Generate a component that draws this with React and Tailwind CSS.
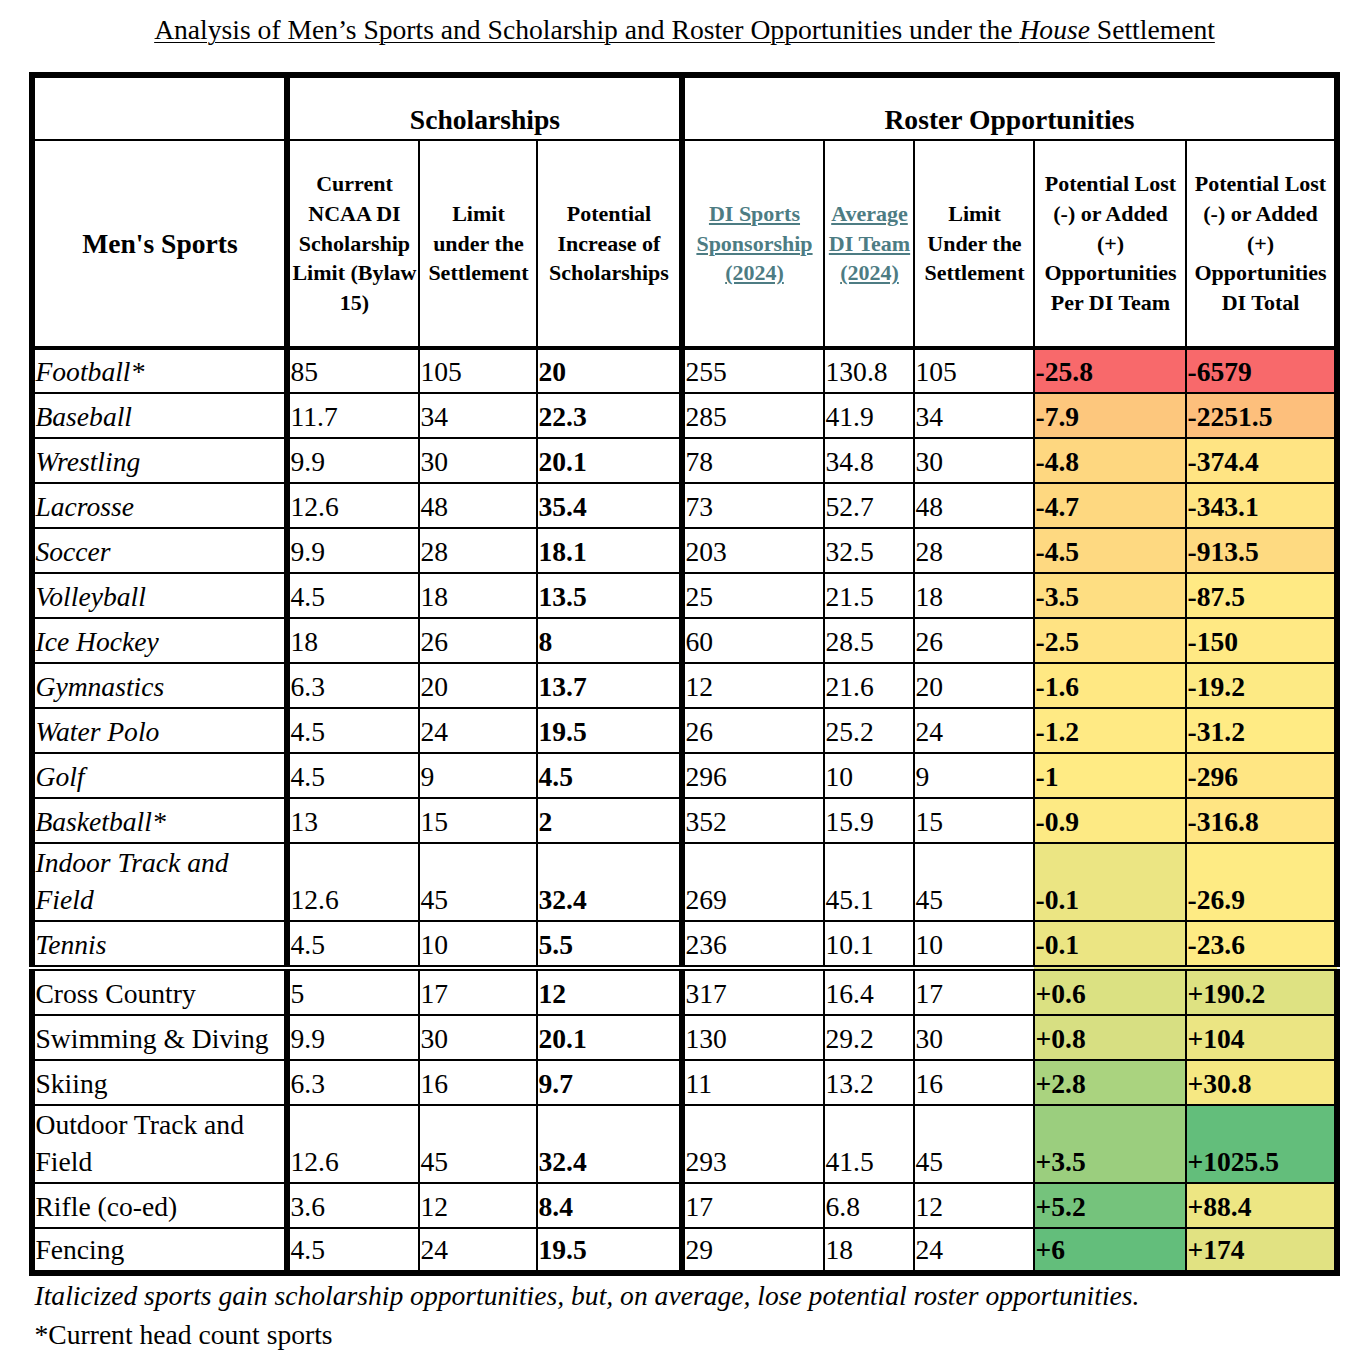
const sports = [
  { name: ["Football*"], italic: true, cur: "85", lim: "105", inc: "20", spons: "255", avg: "130.8", rlim: "105", per: "-25.8", perBg: "bg-[#f8696b]", tot: "-6579", totBg: "bg-[#f8696b]" },
  { name: ["Baseball"], italic: true, cur: "11.7", lim: "34", inc: "22.3", spons: "285", avg: "41.9", rlim: "34", per: "-7.9", perBg: "bg-[#fdc77d]", tot: "-2251.5", totBg: "bg-[#fdbf7c]" },
  { name: ["Wrestling"], italic: true, cur: "9.9", lim: "30", inc: "20.1", spons: "78", avg: "34.8", rlim: "30", per: "-4.8", perBg: "bg-[#fed780]", tot: "-374.4", totBg: "bg-[#ffe483]" },
  { name: ["Lacrosse"], italic: true, cur: "12.6", lim: "48", inc: "35.4", spons: "73", avg: "52.7", rlim: "48", per: "-4.7", perBg: "bg-[#fed880]", tot: "-343.1", totBg: "bg-[#ffe583]" },
  { name: ["Soccer"], italic: true, cur: "9.9", lim: "28", inc: "18.1", spons: "203", avg: "32.5", rlim: "28", per: "-4.5", perBg: "bg-[#fed981]", tot: "-913.5", totBg: "bg-[#feda81]" },
  { name: ["Volleyball"], italic: true, cur: "4.5", lim: "18", inc: "13.5", spons: "25", avg: "21.5", rlim: "18", per: "-3.5", perBg: "bg-[#fede82]", tot: "-87.5", totBg: "bg-[#ffea84]" },
  { name: ["Ice Hockey"], italic: true, cur: "18", lim: "26", inc: "8", spons: "60", avg: "28.5", rlim: "26", per: "-2.5", perBg: "bg-[#ffe383]", tot: "-150", totBg: "bg-[#ffe984]" },
  { name: ["Gymnastics"], italic: true, cur: "6.3", lim: "20", inc: "13.7", spons: "12", avg: "21.6", rlim: "20", per: "-1.6", perBg: "bg-[#ffe883]", tot: "-19.2", totBg: "bg-[#fdea84]" },
  { name: ["Water Polo"], italic: true, cur: "4.5", lim: "24", inc: "19.5", spons: "26", avg: "25.2", rlim: "24", per: "-1.2", perBg: "bg-[#ffea84]", tot: "-31.2", totBg: "bg-[#ffeb84]" },
  { name: ["Golf"], italic: true, cur: "4.5", lim: "9", inc: "4.5", spons: "296", avg: "10", rlim: "9", per: "-1", perBg: "bg-[#ffeb84]", tot: "-296", totBg: "bg-[#ffe683]" },
  { name: ["Basketball*"], italic: true, cur: "13", lim: "15", inc: "2", spons: "352", avg: "15.9", rlim: "15", per: "-0.9", perBg: "bg-[#fdea84]", tot: "-316.8", totBg: "bg-[#ffe583]" },
  { name: ["Indoor Track and", "Field"], italic: true, cur: "12.6", lim: "45", inc: "32.4", spons: "269", avg: "45.1", rlim: "45", per: "-0.1", perBg: "bg-[#ebe583]", tot: "-26.9", totBg: "bg-[#feeb84]" },
  { name: ["Tennis"], italic: true, sep: true, tall: true, cur: "4.5", lim: "10", inc: "5.5", spons: "236", avg: "10.1", rlim: "10", per: "-0.1", perBg: "bg-[#ebe583]", tot: "-23.6", totBg: "bg-[#feeb84]" },
  { name: ["Cross Country"], tall: true, cur: "5", lim: "17", inc: "12", spons: "317", avg: "16.4", rlim: "17", per: "+0.6", perBg: "bg-[#dbe182]", tot: "+190.2", totBg: "bg-[#dee282]" },
  { name: ["Swimming & Diving"], cur: "9.9", lim: "30", inc: "20.1", spons: "130", avg: "29.2", rlim: "30", per: "+0.8", perBg: "bg-[#d7df82]", tot: "+104", totBg: "bg-[#ebe583]" },
  { name: ["Skiing"], cur: "6.3", lim: "16", inc: "9.7", spons: "11", avg: "13.2", rlim: "16", per: "+2.8", perBg: "bg-[#aad37f]", tot: "+30.8", totBg: "bg-[#f6e883]" },
  { name: ["Outdoor Track and", "Field"], cur: "12.6", lim: "45", inc: "32.4", spons: "293", avg: "41.5", rlim: "45", per: "+3.5", perBg: "bg-[#9bce7e]", tot: "+1025.5", totBg: "bg-[#63be7b]" },
  { name: ["Rifle (co-ed)"], cur: "3.6", lim: "12", inc: "8.4", spons: "17", avg: "6.8", rlim: "12", per: "+5.2", perBg: "bg-[#75c37c]", tot: "+88.4", totBg: "bg-[#ede683]" },
  { name: ["Fencing"], cur: "4.5", lim: "24", inc: "19.5", spons: "29", avg: "18", rlim: "24", per: "+6", perBg: "bg-[#63be7b]", tot: "+174", totBg: "bg-[#e1e282]" },
];

const headers = [
  { lines: ["Current", "NCAA DI", "Scholarship", "Limit (Bylaw", "15)"] },
  { lines: ["Limit", "under the", "Settlement"] },
  { lines: ["Potential", "Increase of", "Scholarships"], thick: true },
  { lines: ["DI Sports", "Sponsorship", "(2024)"], link: true },
  { lines: ["Average", "DI Team", "(2024)"], link: true },
  { lines: ["Limit", "Under the", "Settlement"] },
  { lines: ["Potential Lost", "(-) or Added", "(+)", "Opportunities", "Per DI Team"] },
  { lines: ["Potential Lost", "(-) or Added", "(+)", "Opportunities", "DI Total"] },
];

const Lines = ({ lines }) =>
  lines.map((line, i) => (
    <span key={i}>
      {i > 0 && <br />}
      {line}
    </span>
  ));

const cell = "border-2 border-black p-0 pb-[2px] align-bottom text-left leading-[37px] whitespace-nowrap";

const SportRow = ({ s }) => {
  const sep = s.sep ? "border-b-[6px] [border-bottom-style:double]" : "";
  return (
    <tr className={s.tall ? "h-[47px]" : "h-[45px]"}>
      <td className={`${cell} ${sep} border-r-[6px] ${s.italic ? "italic" : ""}`}>
        <Lines lines={s.name} />
      </td>
      <td className={`${cell} ${sep}`}>{s.cur}</td>
      <td className={`${cell} ${sep}`}>{s.lim}</td>
      <td className={`${cell} ${sep} border-r-[6px] font-bold`}>{s.inc}</td>
      <td className={`${cell} ${sep}`}>{s.spons}</td>
      <td className={`${cell} ${sep}`}>{s.avg}</td>
      <td className={`${cell} ${sep}`}>{s.rlim}</td>
      <td className={`${cell} ${sep} font-bold ${s.perBg}`}>{s.per}</td>
      <td className={`${cell} ${sep} font-bold ${s.totBg}`}>{s.tot}</td>
    </tr>
  );
};

export default function App() {
  return (
    <div className="min-h-screen bg-white pt-[14px] text-black font-['Liberation_Serif','Times_New_Roman',serif] text-[27.6px]">
      <h1 className="text-center text-[27.6px] font-normal leading-[32px] underline decoration-1 underline-offset-[3px]">
        Analysis of Men’s Sports and Scholarship and Roster Opportunities under the <i>House</i> Settlement
      </h1>

      <table className="mx-auto mt-[26px] w-[1310px] table-fixed border-collapse border-[6px] border-black">
        <colgroup>
          <col className="w-[255px]" />
          <col className="w-[132px]" />
          <col className="w-[118px]" />
          <col className="w-[145px]" />
          <col className="w-[142px]" />
          <col className="w-[90px]" />
          <col className="w-[120px]" />
          <col className="w-[152px]" />
          <col className="w-[150px]" />
        </colgroup>
        <thead>
          <tr className="h-[65px]">
            <th className="border-2 border-r-[6px] border-black p-0" />
            <th colSpan={3} className="border-2 border-r-[6px] border-black p-0 pb-[4px] align-bottom text-[27.6px] font-bold leading-[30px]">
              Scholarships
            </th>
            <th colSpan={5} className="border-2 border-black p-0 pb-[4px] align-bottom text-[27.6px] font-bold leading-[30px]">
              Roster Opportunities
            </th>
          </tr>
          <tr className="h-[208px]">
            <th className="border-2 border-b-4 border-r-[6px] border-black p-0 align-middle text-[27.6px] font-bold">
              Men's Sports
            </th>
            {headers.map((h, i) => (
              <th
                key={i}
                className={`border-2 border-b-4 border-black p-0 align-middle text-[22px] font-bold leading-[29.75px] whitespace-nowrap ${
                  h.thick ? "border-r-[6px]" : ""
                } ${h.link ? "text-[#4d7c83] underline decoration-2 underline-offset-2" : ""}`}
              >
                <Lines lines={h.lines} />
              </th>
            ))}
          </tr>
        </thead>
        <tbody>
          {sports.map((s) => (
            <SportRow key={s.name.join(" ")} s={s} />
          ))}
        </tbody>
      </table>

      <div className="mx-auto w-[1310px] pl-[5px] leading-[39px]">
        <p className="italic">
          Italicized sports gain scholarship opportunities, but, on average, lose potential roster opportunities.
        </p>
        <p>*Current head count sports</p>
      </div>
    </div>
  );
}
